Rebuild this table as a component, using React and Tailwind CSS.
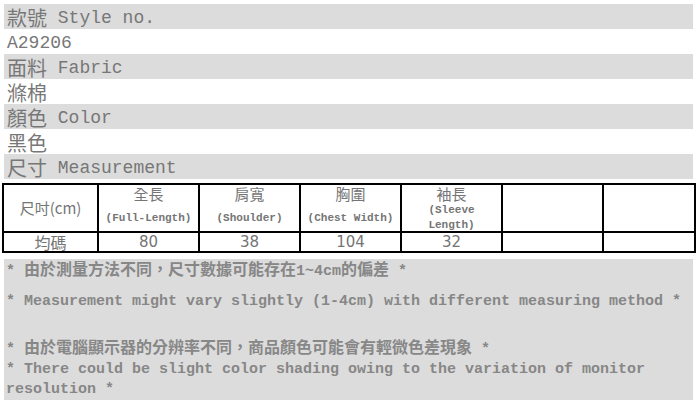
const mono = { fontFamily: '"Liberation Mono", "Noto Sans CJK TC", monospace' };

function Cjk({ children, className = "" }) {
  return <span className={`font-['Noto_Sans_CJK_TC',sans-serif] ${className}`}>{children}</span>;
}

function InfoRow({ shaded, cjk, latin }) {
  return (
    <div className={`h-[25px] flex items-center pl-[3px] pt-[3px] text-[18px] leading-[20px] text-[#777777] ${shaded ? "bg-[#dcdcdc]" : "bg-white"}`}>
      {cjk && <Cjk className="text-[20px] leading-[20px]">{cjk}</Cjk>}
      {latin && <span className="font-['Liberation_Mono',monospace] whitespace-pre">{latin}</span>}
    </div>
  );
}

const cols = [
  { zh: "全長", en: "(Full-Length)", v: "80" },
  { zh: "肩寬", en: "(Shoulder)", v: "38" },
  { zh: "胸圍", en: "(Chest Width)", v: "104" },
  { zh: "袖長", en: "(Sleeve Length)", v: "32" },
];

export default function App() {
  return (
    <div className="w-[698px] h-[402px] bg-white overflow-hidden" style={mono}>
      <div className="pt-[4px] pl-[4px] pr-[5px]">
        <InfoRow shaded cjk="款號" latin=" Style no." />
        <InfoRow latin="A29206" />
        <InfoRow shaded cjk="面料" latin=" Fabric" />
        <InfoRow cjk="滌棉" />
        <InfoRow shaded cjk="顏色" latin=" Color" />
        <InfoRow cjk="黑色" />
        <InfoRow shaded cjk="尺寸" latin=" Measurement" />
      </div>

      <div className="pl-[2px] mt-[4px]">
        <table className="table-fixed border-collapse w-[692px] text-[#757575]">
          <colgroup>
            <col className="w-[95px]" />
            <col className="w-[101px]" />
            <col className="w-[101px]" />
            <col className="w-[101px]" />
            <col className="w-[101px]" />
            <col className="w-[101px]" />
            <col className="w-[92px]" />
          </colgroup>
          <tbody>
            <tr>
              <td className="border-2 border-black p-0">
                <div className="h-[46px] flex items-center justify-center">
                  <Cjk className="text-[15px] leading-[16px]">尺吋(cm)</Cjk>
                </div>
              </td>
              {cols.map((c) => (
                <td key={c.zh} className="border-2 border-black p-0 align-top">
                  <div className="h-[46px] flex flex-col items-center text-center overflow-visible">
                    <Cjk className="text-[15px] leading-[17px]">{c.zh}</Cjk>
                    <span className={`font-['Liberation_Mono',monospace] font-bold text-[11px] ${c.en.length > 14 ? "w-[60px] mt-[1px] leading-[15px]" : "mt-[9px] leading-[14px]"}`}>
                      {c.en}
                    </span>
                  </div>
                </td>
              ))}
              <td className="border-2 border-black p-0" />
              <td className="border-2 border-black p-0" />
            </tr>
            <tr>
              <td className="border-2 border-black p-0">
                <div className="h-[18px] flex items-center justify-center">
                  <Cjk className="text-[16px] leading-[16px]">均碼</Cjk>
                </div>
              </td>
              {cols.map((c) => (
                <td key={c.v} className="border-2 border-black p-0">
                  <div className="h-[18px] flex items-center justify-center text-[15px] leading-[16px] font-['DejaVu_Sans',sans-serif]">
                    {c.v}
                  </div>
                </td>
              ))}
              <td className="border-2 border-black p-0" />
              <td className="border-2 border-black p-0" />
            </tr>
          </tbody>
        </table>
      </div>

      <div className="mt-[6px] ml-[4px] w-[689px] h-[141px] bg-[#dcdcdc] pl-[2px] pt-[1px] text-[15px] leading-[20px] font-bold text-[#878787]">
        <p className="h-[20px] whitespace-pre">
          * <Cjk className="text-[16px] leading-none">由於測量方法不同，尺寸數據可能存在</Cjk>1~4cm<Cjk className="text-[16px] leading-none">的偏差</Cjk> *
        </p>
        <p className="mt-[12px]">* Measurement might vary slightly (1-4cm) with different measuring method *</p>
        <p className="mt-[26px] h-[20px] whitespace-pre">
          * <Cjk className="text-[16px] leading-none">由於電腦顯示器的分辨率不同，商品顏色可能會有輕微色差現象</Cjk> *
        </p>
        <p className="mt-[2px]">* There could be slight color shading owing to the variation of monitor resolution *</p>
      </div>
    </div>
  );
}
